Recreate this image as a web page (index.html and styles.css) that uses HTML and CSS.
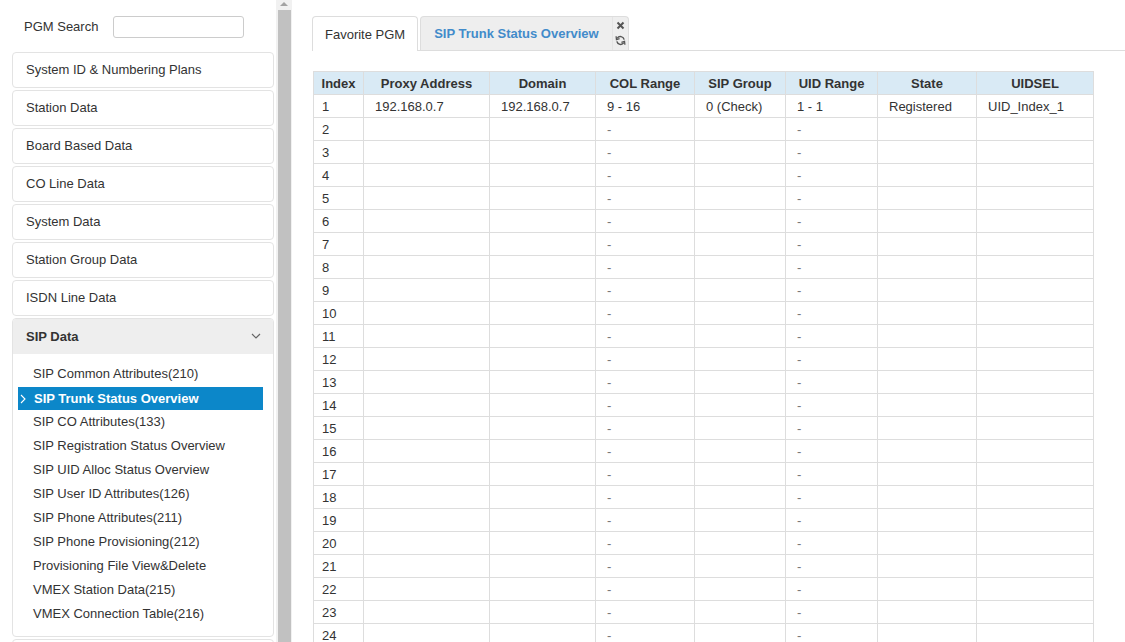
FILE: index.html
```html
<!DOCTYPE html>
<html lang="en">

<head>
    <meta charset="UTF-8">
    <title>SIP Trunk Status Overview</title>
    <link rel="stylesheet" href="styles.css">
</head>

<body>
    <div class="sidebar-wrap">
        <div class="sidebar">
            <div class="search">
                <label for="pgm-search">PGM Search</label>
                <input type="text" id="pgm-search">
            </div>
            <div class="menu-card">System ID &amp; Numbering Plans</div>
            <div class="menu-card">Station Data</div>
            <div class="menu-card">Board Based Data</div>
            <div class="menu-card">CO Line Data</div>
            <div class="menu-card">System Data</div>
            <div class="menu-card">Station Group Data</div>
            <div class="menu-card">ISDN Line Data</div>
            <div class="menu-card open">
                <div class="menu-head">
                    <span>SIP Data</span>
                    <svg width="10" height="6" viewBox="0 0 10 6"><path d="M1 1 L5 5 L9 1" fill="none" stroke="#666" stroke-width="1.2"/></svg>
                </div>
                <ul class="sub-menu">
                    <li>SIP Common Attributes(210)</li>
                    <li class="active">
                        <svg class="caret" width="6" height="10" viewBox="0 0 6 10"><path d="M1 1 L5 5 L1 9" fill="none" stroke="#fff" stroke-width="1.1"/></svg>
                        SIP Trunk Status Overview
                    </li>
                    <li>SIP CO Attributes(133)</li>
                    <li>SIP Registration Status Overview</li>
                    <li>SIP UID Alloc Status Overview</li>
                    <li>SIP User ID Attributes(126)</li>
                    <li>SIP Phone Attributes(211)</li>
                    <li>SIP Phone Provisioning(212)</li>
                    <li>Provisioning File View&amp;Delete</li>
                    <li>VMEX Station Data(215)</li>
                    <li>VMEX Connection Table(216)</li>
                </ul>
            </div>
            <div class="menu-card"></div>
        </div>
        <div class="scrollbar">
            <div class="scroll-up"></div>
            <div class="thumb"></div>
        </div>
    </div>

    <div class="main">
        <div class="tabs">
            <div class="tab">Favorite PGM</div>
            <div class="tab current">
                <span>SIP Trunk Status Overview</span>
                <div class="tab-tools">
                    <svg width="9" height="9" viewBox="0 0 9 9"><path d="M1.5 1.5 L7.5 7.5 M7.5 1.5 L1.5 7.5" stroke="#555" stroke-width="2"/></svg>
                    <svg width="11" height="11" viewBox="0 0 12 12"><path d="M10 5 A4.2 4.2 0 0 0 2.4 3.6" fill="none" stroke="#555" stroke-width="1.6"/><path d="M1.2 1.4 L1.6 5 L5 4" fill="none" stroke="#555" stroke-width="1.4"/><path d="M2 7 A4.2 4.2 0 0 0 9.6 8.4" fill="none" stroke="#555" stroke-width="1.6"/><path d="M10.8 10.6 L10.4 7 L7 8" fill="none" stroke="#555" stroke-width="1.4"/></svg>
                </div>
            </div>
        </div>

        <table class="grid">
            <colgroup>
                <col style="width:50px"><col style="width:126px"><col style="width:106px"><col style="width:99px">
                <col style="width:91px"><col style="width:92px"><col style="width:99px"><col style="width:117px">
            </colgroup>
            <thead>
                <tr>
                    <th>Index</th><th>Proxy Address</th><th>Domain</th><th>COL Range</th>
                    <th>SIP Group</th><th>UID Range</th><th>State</th><th>UIDSEL</th>
                </tr>
            </thead>
            <tbody>
                <tr>
                    <td>1</td><td>192.168.0.7</td><td>192.168.0.7</td><td>9 - 16</td>
                    <td>0 (Check)</td><td>1 - 1</td><td>Registered</td><td>UID_Index_1</td>
                </tr>
                <tr><td>2</td><td></td><td></td><td class="dash">-</td><td></td><td class="dash">-</td><td></td><td></td></tr>
                <tr><td>3</td><td></td><td></td><td class="dash">-</td><td></td><td class="dash">-</td><td></td><td></td></tr>
                <tr><td>4</td><td></td><td></td><td class="dash">-</td><td></td><td class="dash">-</td><td></td><td></td></tr>
                <tr><td>5</td><td></td><td></td><td class="dash">-</td><td></td><td class="dash">-</td><td></td><td></td></tr>
                <tr><td>6</td><td></td><td></td><td class="dash">-</td><td></td><td class="dash">-</td><td></td><td></td></tr>
                <tr><td>7</td><td></td><td></td><td class="dash">-</td><td></td><td class="dash">-</td><td></td><td></td></tr>
                <tr><td>8</td><td></td><td></td><td class="dash">-</td><td></td><td class="dash">-</td><td></td><td></td></tr>
                <tr><td>9</td><td></td><td></td><td class="dash">-</td><td></td><td class="dash">-</td><td></td><td></td></tr>
                <tr><td>10</td><td></td><td></td><td class="dash">-</td><td></td><td class="dash">-</td><td></td><td></td></tr>
                <tr><td>11</td><td></td><td></td><td class="dash">-</td><td></td><td class="dash">-</td><td></td><td></td></tr>
                <tr><td>12</td><td></td><td></td><td class="dash">-</td><td></td><td class="dash">-</td><td></td><td></td></tr>
                <tr><td>13</td><td></td><td></td><td class="dash">-</td><td></td><td class="dash">-</td><td></td><td></td></tr>
                <tr><td>14</td><td></td><td></td><td class="dash">-</td><td></td><td class="dash">-</td><td></td><td></td></tr>
                <tr><td>15</td><td></td><td></td><td class="dash">-</td><td></td><td class="dash">-</td><td></td><td></td></tr>
                <tr><td>16</td><td></td><td></td><td class="dash">-</td><td></td><td class="dash">-</td><td></td><td></td></tr>
                <tr><td>17</td><td></td><td></td><td class="dash">-</td><td></td><td class="dash">-</td><td></td><td></td></tr>
                <tr><td>18</td><td></td><td></td><td class="dash">-</td><td></td><td class="dash">-</td><td></td><td></td></tr>
                <tr><td>19</td><td></td><td></td><td class="dash">-</td><td></td><td class="dash">-</td><td></td><td></td></tr>
                <tr><td>20</td><td></td><td></td><td class="dash">-</td><td></td><td class="dash">-</td><td></td><td></td></tr>
                <tr><td>21</td><td></td><td></td><td class="dash">-</td><td></td><td class="dash">-</td><td></td><td></td></tr>
                <tr><td>22</td><td></td><td></td><td class="dash">-</td><td></td><td class="dash">-</td><td></td><td></td></tr>
                <tr><td>23</td><td></td><td></td><td class="dash">-</td><td></td><td class="dash">-</td><td></td><td></td></tr>
                <tr><td>24</td><td></td><td></td><td class="dash">-</td><td></td><td class="dash">-</td><td></td><td></td></tr>
            </tbody>
        </table>
    </div>
</body>

</html>
```

FILE: styles.css
```css
* {
    margin: 0;
    padding: 0;
    box-sizing: border-box;
}

body {
    font-family: 'Liberation Sans', Arial, sans-serif;
    font-size: 13px;
    color: #333;
    background: #fff;
    display: flex;
    height: 642px;
    overflow: hidden;
}

/* Left menu */
.sidebar-wrap {
    display: flex;
    width: 292px;
    height: 642px;
    flex-shrink: 0;
    overflow: hidden;
}

.sidebar {
    width: 276px;
    padding: 0 2px 0 12px;
}

.search {
    display: flex;
    align-items: center;
    height: 52px;
    padding-left: 12px;
}

.search label {
    width: 89px;
}

.search input {
    width: 131px;
    height: 22px;
    margin-top: 2px;
    border: 1px solid #ccc;
    border-radius: 3px;
}

.menu-card {
    height: 36px;
    margin-bottom: 2px;
    padding: 0 0 1px 13px;
    display: flex;
    align-items: center;
    border: 1px solid #e3e3e3;
    border-radius: 4px;
    background: #fff;
}

.menu-card.open {
    height: auto;
    display: block;
    padding: 0;
    overflow: hidden;
}

.menu-head {
    height: 35px;
    display: flex;
    align-items: center;
    justify-content: space-between;
    padding: 0 12px 1px 13px;
    background: #eee;
    font-weight: bold;
}

.sub-menu {
    list-style: none;
    margin: 8px 10px 10px 5px;
}

.sub-menu li {
    height: 24px;
    line-height: 24px;
    padding-left: 15px;
    position: relative;
}

.sub-menu li.active {
    background: #0c87c9;
    color: #fff;
    font-weight: bold;
    height: 23px;
    line-height: 23px;
    margin: 1px 0 0;
    padding-left: 16px;
}

.caret {
    position: absolute;
    left: 2px;
    top: 7px;
}

.scrollbar {
    width: 16px;
    background: #f1f1f1;
    display: flex;
    flex-direction: column;
    align-items: center;
}

.scroll-up {
    width: 0;
    height: 0;
    margin-top: 2px;
    border-left: 4px solid transparent;
    border-right: 4px solid transparent;
    border-bottom: 4px solid #a3a3a3;
}

.thumb {
    width: 13px;
    flex: 1;
    margin-top: 4px;
    background: #c1c1c1;
}

/* Content */
.main {
    flex: 1;
    padding: 16px 0 0 20px;
}

.tabs {
    display: flex;
    align-items: flex-end;
    gap: 2px;
    height: 35px;
    border-bottom: 1px solid #ddd;
}

.tab {
    height: 35px;
    display: flex;
    align-items: center;
    padding: 0 12px;
    border: 1px solid #ddd;
    border-bottom: none;
    border-radius: 4px 4px 0 0;
    background: #fff;
    margin-bottom: -1px;
}

.tab.current {
    background: #eee;
    color: #428bca;
    font-weight: bold;
    padding: 0 0 0 13px;
    margin-bottom: 0;
    height: 34px;
}

.tab-tools {
    display: flex;
    flex-direction: column;
    align-items: center;
    gap: 5px;
    width: 16px;
    margin-left: 13px;
    height: 100%;
    justify-content: center;
    border-left: 1px solid #e4e4e4;
}

.grid {
    margin: 20px 0 0 1px;
    width: 780px;
    border-collapse: collapse;
    table-layout: fixed;
}

.grid th,
.grid td {
    height: 23px;
    border: 1px solid #ddd;
    padding: 0 11px;
    white-space: nowrap;
    text-align: left;
}

.grid th {
    background: #d9eaf5;
    font-weight: bold;
    text-align: center;
    padding: 0 4px;
}

.grid td:first-child {
    padding-left: 8px;
}

.grid td.dash {
    color: #777;
}
```
